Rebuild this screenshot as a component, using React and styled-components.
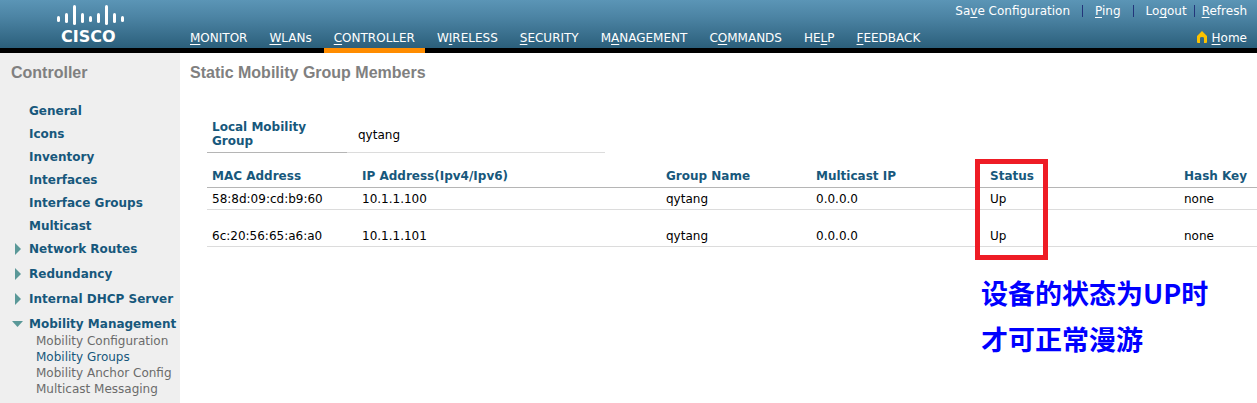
import React from "react";
import styled, { createGlobalStyle } from "styled-components";

const GlobalStyle = createGlobalStyle`
  * { box-sizing: border-box; }
  body {
    margin: 0;
    background: #fff;
    color: #000;
    font: 12px/14px Verdana, "DejaVu Sans", sans-serif;
  }
  #root { min-height: 100vh; display: flex; flex-direction: column; }
`;

const Header = styled.header`
  display: flex;
  height: 53px;
  border-bottom: 5px solid #000;
  background: linear-gradient(#5b95b6, #4c84a4 35%, #2b5f7b);
  background-clip: padding-box;
`;

const Brand = styled.a`
  flex: none;
  width: 180px;
  padding: 5px 0 0 56px;
  color: #fff;
  text-decoration: none;
`;

const Bars = styled.svg`
  display: block;
  width: 70px;
  height: 22px;
`;

const BrandName = styled.span`
  display: block;
  padding-left: 5px;
  font: bold 16px/20px Verdana, "DejaVu Sans", sans-serif;
`;

const Nav = styled.nav`
  display: flex;
  align-items: flex-end;
  gap: 2px;
  height: 53px;
`;

const NavLink = styled.a`
  height: 25px;
  padding: 3px 10px 0;
  border-bottom: 5px solid ${(p) => (p.$active ? "#ff8c00" : "transparent")};
  color: #fff;
  text-decoration: none;
  white-space: nowrap;
`;

const Key = styled.span`
  text-decoration: underline;
  text-underline-offset: 2px;
`;

const Tools = styled.div`
  flex: 1;
  display: flex;
  flex-direction: column;
  align-items: flex-end;
  justify-content: space-between;
  height: 48px;
  padding: 4px 10px 3px 0;
`;

const ToolRow = styled.div`
  display: flex;
  align-items: center;
  white-space: nowrap;
`;

const ToolLink = styled.a`
  color: #fff;
  text-decoration: none;
  display: flex;
  gap: 4px;
`;

const Divider = styled.span`
  width: 1px;
  height: 12px;
  margin: 0 ${(p) => (p.$tight ? 7 : 12)}px;
  background: #23357a;
`;

const Body = styled.div`
  flex: 1;
  display: flex;
`;

const Sidebar = styled.aside`
  flex: none;
  width: 180px;
  padding: 10px 0 6px;
  background: #efefef;
`;

const Title = styled.h1`
  margin: 0;
  padding-left: ${(p) => p.$indent}px;
  color: #808080;
  font: bold 16px/20px Arial, "Liberation Sans", sans-serif;
`;

const Menu = styled.ul`
  list-style: none;
  margin: 0;
  padding: 12px 0 0;
`;

const MenuItem = styled.li`
  padding-top: ${(p) => (p.$spaced ? 11 : 9)}px;
`;

const MenuLink = styled.a`
  display: flex;
  align-items: center;
  color: #17587c;
  font-weight: bold;
  text-decoration: none;
  white-space: nowrap;
`;

const ArrowSlot = styled.span`
  flex: none;
  display: flex;
  width: 29px;
  padding-left: 11px;
`;

const Arrow = styled.svg`
  width: 12px;
  height: 12px;
  fill: #5a9898;
`;

const SubMenu = styled.ul`
  list-style: none;
  margin: 0;
  padding: 2px 0 0 36px;
  line-height: 16px;
`;

const SubLink = styled.a`
  color: ${(p) => (p.$active ? "#17587c" : "#6b6b6b")};
  text-decoration: none;
  white-space: nowrap;
`;

const Main = styled.main`
  flex: 1;
  min-width: 0;
  padding-top: 10px;
`;

const Content = styled.div`
  padding: 34px 0 0 27px;
`;

const GroupTable = styled.table`
  width: 398px;
  table-layout: fixed;
  border-collapse: collapse;
`;

const GroupLabel = styled.th`
  width: 140px;
  padding: 3px 24px 4px 5px;
  border-bottom: 1px solid #b5b5b5;
  color: #17587c;
  text-align: left;
`;

const GroupValue = styled.td`
  padding: 2px 11px;
  border-bottom: 1px solid #dcdcdc;
`;

const MembersTable = styled.table`
  width: 100%;
  margin-top: 14px;
  table-layout: fixed;
  border-collapse: collapse;
`;

const Col = styled.col`
  width: ${(p) => p.$w};
`;

const HeadCell = styled.th`
  height: 20px;
  padding: 0 0 1px 5px;
  border-bottom: 1px solid #b5b5b5;
  color: #17587c;
  text-align: left;
  white-space: nowrap;
`;

const Cell = styled.td`
  height: ${(p) => (p.$first ? 22 : 37)}px;
  padding: 0 0 3px 5px;
  border-bottom: 1px solid #dcdcdc;
  vertical-align: bottom;
  white-space: nowrap;
`;

const StatusHead = styled(HeadCell)`
  position: relative;
`;

const Highlight = styled.span`
  position: absolute;
  left: -10px;
  top: -8px;
  width: 73px;
  height: 101px;
  border: 5px solid #ee1c25;
  pointer-events: none;
`;

const Note = styled.p`
  position: absolute;
  left: -4px;
  top: 103px;
  margin: 0;
  color: #0000ff;
  font: bold 27px/46px "Noto Sans CJK SC", sans-serif;
`;

const NAV = [
  ["", "M", "ONITOR"],
  ["", "W", "LANs"],
  ["", "C", "ONTROLLER"],
  ["W", "I", "RELESS"],
  ["", "S", "ECURITY"],
  ["M", "A", "NAGEMENT"],
  ["C", "O", "MMANDS"],
  ["HE", "L", "P"],
  ["", "F", "EEDBACK"],
];

const MENU = [
  { label: "General" },
  { label: "Icons" },
  { label: "Inventory" },
  { label: "Interfaces" },
  { label: "Interface Groups" },
  { label: "Multicast" },
  { label: "Network Routes", arrow: "right" },
  { label: "Redundancy", arrow: "right", spaced: true },
  { label: "Internal DHCP Server", arrow: "right", spaced: true },
  {
    label: "Mobility Management",
    arrow: "down",
    spaced: true,
    children: [
      "Mobility Configuration",
      "Mobility Groups",
      "Mobility Anchor Config",
      "Multicast Messaging",
    ],
  },
];

const MEMBERS = [
  ["58:8d:09:cd:b9:60", "10.1.1.100", "qytang", "0.0.0.0", "Up", "none"],
  ["6c:20:56:65:a6:a0", "10.1.1.101", "qytang", "0.0.0.0", "Up", "none"],
];

const BARS = [
  [1, 11, 6],
  [9, 8, 10],
  [17, 0, 20],
  [25, 8, 10],
  [33, 11, 6],
  [41, 8, 10],
  [49, 0, 20],
  [57, 8, 10],
  [65, 11, 6],
];

function KeyText({ parts }) {
  return (
    <span>
      {parts[0]}
      <Key>{parts[1]}</Key>
      {parts[2]}
    </span>
  );
}

export default function App() {
  return (
    <>
      <GlobalStyle />
      <Header>
        <Brand href="#">
          <Bars viewBox="0 0 70 22" aria-hidden="true">
            {BARS.map(([x, y, h]) => (
              <rect key={x} x={x} y={y} width="3" height={h} rx="1.5" fill="#fff" />
            ))}
          </Bars>
          <BrandName>CISCO</BrandName>
        </Brand>
        <Nav>
          {NAV.map((parts, i) => (
            <NavLink key={i} href="#" $active={i === 2}>
              <KeyText parts={parts} />
            </NavLink>
          ))}
        </Nav>
        <Tools>
          <ToolRow>
            <ToolLink href="#"><KeyText parts={["Sa", "v", "e Configuration"]} /></ToolLink>
            <Divider />
            <ToolLink href="#"><KeyText parts={["", "P", "ing"]} /></ToolLink>
            <Divider />
            <ToolLink href="#"><KeyText parts={["Lo", "g", "out"]} /></ToolLink>
            <Divider $tight />
            <ToolLink href="#"><KeyText parts={["", "R", "efresh"]} /></ToolLink>
          </ToolRow>
          <ToolLink href="#">
            <svg width="12" height="12" viewBox="0 0 12 12" aria-hidden="true">
              <path d="M6 0 L11 5 V11 Q11 12 10 12 H8 V7 Q8 6 6 6 Q4 6 4 7 V12 H2 Q1 12 1 11 V5 Z" fill="#fcc200" />
            </svg>
            <KeyText parts={["", "H", "ome"]} />
          </ToolLink>
        </Tools>
      </Header>
      <Body>
        <Sidebar>
          <Title as="h2" $indent={11}>Controller</Title>
          <Menu>
            {MENU.map((item) => (
              <MenuItem key={item.label} $spaced={item.spaced}>
                <MenuLink href="#">
                  <ArrowSlot>
                    {item.arrow && (
                      <Arrow viewBox="0 0 12 12" aria-hidden="true">
                        <path d={item.arrow === "right" ? "M4 0 L10 6 L4 12 Z" : "M1 3 H12 L6.500 9 Z"} />
                      </Arrow>
                    )}
                  </ArrowSlot>
                  {item.label}
                </MenuLink>
                {item.children && (
                  <SubMenu>
                    {item.children.map((child) => (
                      <li key={child}>
                        <SubLink href="#" $active={child === "Mobility Groups"}>{child}</SubLink>
                      </li>
                    ))}
                  </SubMenu>
                )}
              </MenuItem>
            ))}
          </Menu>
        </Sidebar>
        <Main>
          <Title $indent={10}>Static Mobility Group Members</Title>
          <Content>
            <GroupTable>
              <tbody>
                <tr>
                  <GroupLabel scope="row">Local Mobility Group</GroupLabel>
                  <GroupValue>qytang</GroupValue>
                </tr>
              </tbody>
            </GroupTable>
            <MembersTable>
              <colgroup>
                <Col $w="150px" />
                <Col $w="304px" />
                <Col $w="150px" />
                <Col $w="174px" />
                <Col $w="194px" />
                <Col $w="auto" />
              </colgroup>
              <thead>
                <tr>
                  <HeadCell>MAC Address</HeadCell>
                  <HeadCell>IP Address(Ipv4/Ipv6)</HeadCell>
                  <HeadCell>Group Name</HeadCell>
                  <HeadCell>Multicast IP</HeadCell>
                  <StatusHead>
                    Status
                    <Highlight />
                    <Note>设备的状态为UP时<br />才可正常漫游</Note>
                  </StatusHead>
                  <HeadCell>Hash Key</HeadCell>
                </tr>
              </thead>
              <tbody>
                {MEMBERS.map((row, r) => (
                  <tr key={row[0]}>
                    {row.map((value, c) => (
                      <Cell key={c} $first={r === 0}>{value}</Cell>
                    ))}
                  </tr>
                ))}
              </tbody>
            </MembersTable>
          </Content>
        </Main>
      </Body>
    </>
  );
}
